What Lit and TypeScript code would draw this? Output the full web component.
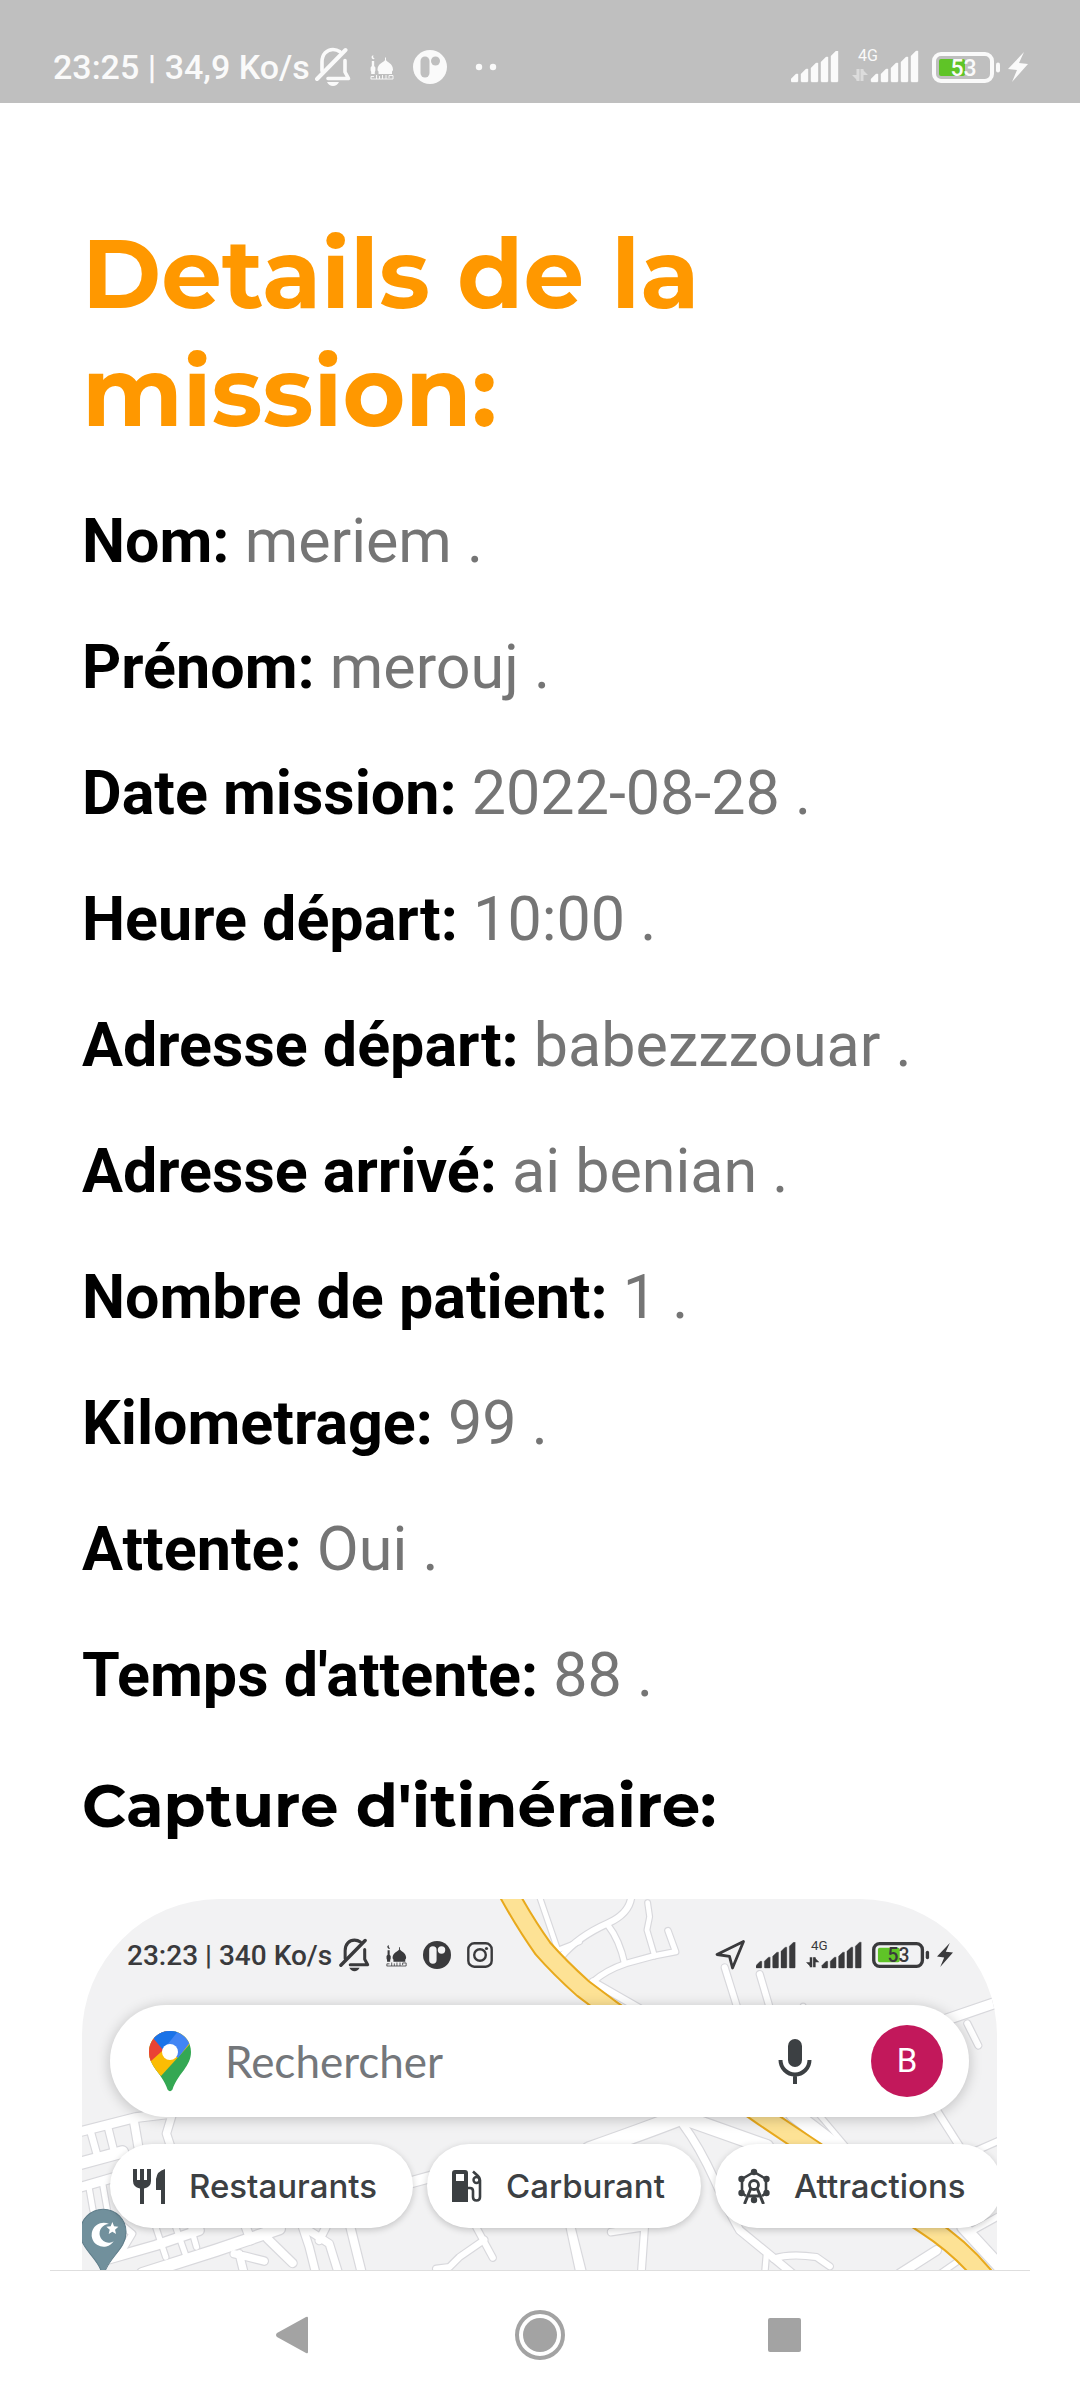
import { LitElement, html, css, svg, nothing } from "lit";
import { customElement, property } from "lit/decorators.js";

/* ---------- shared status bar ---------- */

const bars = svg`
  ${[8, 13, 19, 25, 31].map(
    (h, i) => svg`<path d="M${i * 10} ${31 - h + 5}l5-5h2V30q0 1-1 1h-5q-1 0-1-1z" stroke="currentColor" stroke-width=".4"/>`
  )}`;

@customElement("status-icons")
class StatusIcons extends LitElement {
  @property() time = "";
  @property() rate = "";
  @property({ type: Boolean }) compact = false;

  static styles = css`
    :host {
      display: flex;
      justify-content: space-between;
      align-items: center;
      font-family: Roboto, "Liberation Sans", sans-serif;
      color: #fafafa;
      --dim: #dcdcdc;
      --hole: #bfbfbf;
    }
    :host([compact]) {
      color: #3a3a3c;
      --dim: #3a3a3c;
      --hole: #f2f2f3;
    }
    svg {
      display: block;
      fill: currentColor;
    }
    .side {
      display: flex;
      align-items: center;
      gap: 19px;
    }
    .label {
      display: flex;
      align-items: center;
      gap: 5px;
      font-size: 34px;
      font-weight: 500;
      white-space: nowrap;
    }
    .right {
      gap: 13px;
    }
    .power {
      display: flex;
      align-items: center;
      gap: 7px;
    }
    .bell { width: 36px; height: 40px; }
    .mosque { width: 24px; height: 26px; }
    .disc { width: 34px; height: 34px; }
    .dots { width: 50px; height: 8px; }
    .signal { width: 48px; height: 32px; }
    .network { width: 67px; height: 44px; }
    .battery { width: 69px; height: 31px; }
    .bolt { width: 20px; height: 32px; }
    :host([compact]) .side { gap: 16px; }
    :host([compact]) .right { gap: 10px; }
    :host([compact]) .power { gap: 7px; }
    :host([compact]) .label { font-size: 28px; gap: 7px; }
    :host([compact]) .bell { width: 31px; height: 34px; }
    :host([compact]) .mosque { width: 21px; height: 23px; }
    :host([compact]) .disc { width: 28px; height: 28px; }
    :host([compact]) .insta { width: 26px; height: 26px; }
    :host([compact]) .arrow { width: 31px; height: 32px; }
    :host([compact]) .signal { width: 40px; height: 27px; }
    :host([compact]) .network { width: 56px; height: 37px; }
    :host([compact]) .battery { width: 58px; height: 26px; }
    :host([compact]) .bolt { width: 16px; height: 26px; }
    text { font-family: Roboto, sans-serif; }
  `;

  render() {
    return html`
      <div class="side">
        <div class="label">
          <span>${this.time} | ${this.rate}</span>
          <svg class="bell" viewBox="0 0 36 40" aria-hidden="true">
            <path d="M7 24V15C7 7 12 2.500 18 2.500c3 0 5 .8 7 2.200M30 13.500V25l3.500 6.500H13" fill="none" stroke="currentColor" stroke-width="3.600" stroke-linejoin="round" stroke-linecap="round"/>
            <path d="M2 32L30.500 3" stroke="currentColor" stroke-width="4" stroke-linecap="round"/>
            <path d="M12 35h12q-2 4-6 4t-6-4z"/>
          </svg>
        </div>
        <svg class="mosque" viewBox="0 0 24 26" aria-hidden="true">
          <path d="M1.800 7h2.400v5l1.200 1.500v3L4.800 18v2H1.200v-2L.6 16.500v-3L1.800 12z"/>
          <path d="M15 3.500h1V6c.5 1.800 7 3.500 7 9.500 0 1-.5 1.500-1 2V20H8.500v-2.500c-.5-.5-1-1-1-2 0-6 7-7.700 7.500-9.500z"/>
          <path d="M3.500 1.200A2 2 0 1 0 4.800 4.800 2.400 2.400 0 0 1 3.500 1.200z"/>
          <path d="M.8 25H23V21.500h-4V24M16 21v4M12.500 21v4M9.500 22v3M6.500 21v4M4 22.500H1V25" fill="none" stroke="currentColor" stroke-width=".9"/>
        </svg>
        <svg class="disc" viewBox="0 0 34 34" aria-hidden="true">
          <circle cx="17" cy="17" r="17"/>
          <rect x="7.500" y="6.500" width="9" height="21" rx="4.500" fill="var(--hole)"/>
          <circle cx="22.500" cy="11" r="4.500" fill="var(--hole)"/>
        </svg>
        ${this.compact
          ? html`<svg class="insta" viewBox="0 0 26 26" aria-hidden="true">
              <g fill="none" stroke="currentColor" stroke-width="2.400">
                <rect x="1.300" y="1.300" width="23.400" height="23.400" rx="6"/>
                <circle cx="13" cy="13" r="5.800"/>
              </g>
              <circle cx="19.500" cy="6.500" r="1.600"/>
            </svg>`
          : html`<svg class="dots" viewBox="0 0 50 8" aria-hidden="true">
              <circle cx="13" cy="4" r="3.200"/><circle cx="27" cy="4" r="3.200"/>
            </svg>`}
      </div>
      <div class="side right">
        ${this.compact
          ? html`<svg class="arrow" viewBox="0 0 31 32" aria-hidden="true">
              <path d="M28.500 2.500L2 15.500l12.500 1.800L17.500 29z" fill="none" stroke="currentColor" stroke-width="2.800" stroke-linejoin="round"/>
            </svg>`
          : nothing}
        <svg class="signal" viewBox="0 0 48 32" aria-hidden="true">${bars}</svg>
        <svg class="network" viewBox="0 -4 67 44">
          <text x="6" y="12" font-size="16">4G</text>
          <path d="M6 20v12M10 20v12" stroke="var(--dim)" stroke-width="3"/>
          <path d="M0 26h6v6zM10 20l6 6h-6z" fill="var(--dim)"/>
          <g transform="translate(19 2)">${bars}</g>
        </svg>
        <div class="power">
          <svg class="battery" viewBox="0 0 69 31">
            <rect x="2" y="2" width="58" height="27" rx="7" fill="none" stroke="currentColor" stroke-width="4"/>
            <rect x="7" y="7" width="26" height="17" rx="2" fill="#5fc427"/>
            <rect x="64" y="10.500" width="4" height="10" rx="2"/>
            <text x="18.500" y="24" font-size="23" font-weight="500">53</text>
          </svg>
          <svg class="bolt" viewBox="0 0 20 32" aria-hidden="true">
            <path d="M16 1L0 18l9 1-5 12L20 13l-9-1z"/>
          </svg>
        </div>
      </div>
    `;
  }
}

/* ---------- map drawing ---------- */

const roads: Array<[number, string]> = [
  [18, "M1505 230Q1555 170 1645 130Q1710 100 1715 50"],
  [16, "M1645 135Q1680 180 1695 250"],
  [16, "M1600 305Q1640 270 1700 250L1780 228 1848 215 1825 152"],
  [14, "M1785 228L1762 150 1770 110 1764 68"],
  [14, "M1440 50L1495 210 1560 185"],
  [18, "M1995 262L2035 390"],
  [18, "M2100 282L2132 390"],
  [14, "M2230 378V400"],
  [20, "M1600 305L1740 385"],
  [30, "M2830 360L2640 425"],
  [18, "M2722 430L2755 496"],
  [20, "M2630 690L2700 800"],
  [18, "M2820 780L2740 815"],
  [48, "M1590 810Q1760 750 1850 715"],
  [42, "M1880 715Q1980 750 2120 800"],
  [22, "M1868 730Q1920 800 1965 900T2040 1050L2150 1140 2210 1190"],
  [44, "M2200 700L2330 800"],
  [14, "M2275 700L2360 800"],
  [20, "M1535 1040L1570 1180"],
  [20, "M1655 1055L1755 1040 1745 1180"],
  [16, "M2120 1120L2115 1180"],
  [18, "M2140 1135Q2190 1118 2270 1130L2310 1158"],
  [26, "M2630 1110L2520 1180"],
  [16, "M2690 1145L2640 1180"],
  [36, "M2710 1040L2830 1170"],
  [18, "M2730 1055L2830 1000"],
  [18, "M1250 1040L1300 1132"],
  [18, "M1275 1078L1200 1130 1170 1160 1130 1165"],
  [18, "M1530 1040L1560 1180"],
  [26, "M60 755L230 712 330 700"],
  [22, "M340 700L322 760 335 800"],
  [34, "M60 850L190 815"],
  [20, "M95 755L118 838"],
  [20, "M148 745L168 825"],
  [24, "M225 725L238 800"],
  [26, "M60 922L170 890"],
  [16, "M88 910L102 990"],
  [16, "M130 905L145 990"],
  [18, "M160 1010L220 1060 190 1110"],
  [28, "M150 1135L290 1095 420 1050"],
  [34, "M250 1180L470 1110 660 1045"],
  [16, "M290 1040L320 1130"],
  [16, "M350 1040L378 1120"],
  [16, "M395 1040L412 1100"],
  [24, "M560 1040L575 1080"],
  [24, "M625 1075L700 1148"],
  [22, "M730 1040L750 1100 770 1180"],
  [22, "M740 1045L810 1090 838 1180"],
  [22, "M800 1040L780 1080"],
  [24, "M872 1035L908 1180"],
  [22, "M525 1120L560 1128 615 1142M540 1120L555 1180"],
  [30, "M1040 910L1120 888"],
];

const highway =
  "M1350 45Q1400 135 1450 205Q1500 262 1570 325L1650 385 2110 708 2235 792 2600 1035Q2700 1100 2770 1185";

const mapDrawing = svg`
  <g fill="none" stroke-linecap="round" stroke-linejoin="round">
    ${roads.map(([w, d]) => svg`<path d=${d} stroke="#d8d8dc" stroke-width=${w + 7}/>`)}
    ${roads.map(([w, d]) => svg`<path d=${d} stroke="#fff" stroke-width=${w}/>`)}
    <path d=${highway} stroke="#e8a91c" stroke-width="62"/>
    <path d=${highway} stroke="#fde295" stroke-width="50"/>
  </g>
  <path d="M132 1190C120 1130 64 1110 64 1055a68 68 0 0 1 137 0C201 1110 145 1130 132 1190z" fill="#71909c" stroke="#5f7d8a" stroke-width="3"/>
  <path d="M150 1031a36 36 0 1 0 14 52a28 28 0 1 1-14-52z" fill="#fff"/>
  <path d="M160 1025l5 13 13 1-10 9 3 13-11-7-11 7 3-13-10-9 13-1z" fill="#fff"/>
`;

/* ---------- itinerary capture ---------- */

@customElement("route-capture")
class RouteCapture extends LitElement {
  static styles = css`
    :host {
      display: block;
      position: relative;
      overflow: hidden;
      border-radius: 137px 137px 0 0;
      background: #f2f2f3;
      font-family: Lato, "Open Sans", sans-serif;
      color: #3c4043;
    }
    svg {
      display: block;
      flex: none;
    }
    .map {
      position: absolute;
      inset: 0;
      width: 100%;
      height: 100%;
    }
    .overlay {
      position: relative;
      padding-top: 38px;
    }
    status-icons {
      margin: 0 44px 0 45px;
      height: 36px;
    }
    button {
      border: 0;
      padding: 0;
      background: none;
      font: inherit;
      color: inherit;
    }
    .search {
      display: flex;
      align-items: center;
      height: 112px;
      margin: 32px 28px 27px;
      padding: 0 26px 0 38px;
      box-sizing: border-box;
      border-radius: 56px;
      background: #fff;
      box-shadow: 0 2px 14px rgba(0, 0, 0, 0.22);
    }
    .pin { width: 44px; height: 62px; }
    .search input {
      flex: 1;
      min-width: 0;
      margin-left: 33px;
      padding: 0;
      border: 0;
      outline: 0;
      background: none;
      font: 44px/56px Lato, "Open Sans", sans-serif;
      color: #3c4043;
    }
    .search input::placeholder {
      color: #74777b;
      opacity: 1;
    }
    .mic svg { width: 34px; height: 46px; }
    .avatar {
      width: 72px;
      height: 72px;
      margin-left: 59px;
      border-radius: 50%;
      background: #c2185b;
      color: #fff;
      font: 33px/72px Roboto, sans-serif;
    }
    .chips {
      display: flex;
      gap: 14px;
      margin-left: 28px;
    }
    .chips button {
      display: flex;
      align-items: center;
      flex: none;
      gap: 23px;
      height: 84px;
      padding: 0 36px 0 22px;
      border-radius: 42px;
      background: #fff;
      box-shadow: 0 2px 7px rgba(0, 0, 0, 0.2);
      font: 500 33px/40px Inter, sans-serif;
    }
    .chips svg {
      width: 34px;
      height: 36px;
      fill: #3c4043;
    }
  `;

  render() {
    return html`
      <svg class="map" viewBox="69 57 2742 1113" preserveAspectRatio="xMinYMin slice" aria-hidden="true">
        ${mapDrawing}
      </svg>
      <div class="overlay">
        <status-icons compact time="23:23" rate="340 Ko/s"></status-icons>
        <div class="search">
          <svg class="pin" viewBox="0 0 44 62" aria-hidden="true">
            <defs>
              <clipPath id="pin"><path d="M22 1C10 1 1 10 1 22c0 7 3 12 7 18 6 8 9 12 11.500 19.500Q22 63 24.500 59.500C27 52 30 48 36 40c4-6 7-11 7-18C43 10 34 1 22 1z"/></clipPath>
            </defs>
            <g clip-path="url(#pin)">
              <path d="M0 0h44v62H0z" fill="#34a853"/>
              <path d="M0 0H44V12L13 46 0 34z" fill="#fbbc04"/>
              <path d="M0 0H20L22 14 3 31 0 32z" fill="#ea4335"/>
              <path d="M44 0V10L30 28 15 16 6 9V0z" fill="#4285f4"/>
              <path d="M0 0H31L15 20 6 9z" fill="#1a73e8"/>
            </g>
            <circle cx="22" cy="22" r="8" fill="#fff"/>
          </svg>
          <input type="text" placeholder="Rechercher" aria-label="Rechercher" />
          <button class="mic" aria-label="Recherche vocale">
            <svg viewBox="0 0 34 46" aria-hidden="true">
              <rect x="10" y="1" width="14" height="28" rx="7" fill="#3c4043"/>
              <path d="M2.500 22a14.500 14.500 0 0 0 29 0M17 36v10" fill="none" stroke="#3c4043" stroke-width="4"/>
            </svg>
          </button>
          <button class="avatar" aria-label="Compte B">B</button>
        </div>
        <div class="chips">
          <button>
            <svg viewBox="0 0 34 36" aria-hidden="true">
              <path d="M1 1h4v11h3V1h4v11h3V1h4v12q0 6-7 7.500V36H8V20.500Q1 19 1 13zM33 1v35h-4V22h-5V11q1-8 9-10z"/>
            </svg>
            Restaurants
          </button>
          <button>
            <svg viewBox="0 0 34 36" aria-hidden="true">
              <path fill-rule="evenodd" d="M6 2h10q3 0 3 3v29H3V5q0-3 3-3zm1 4v7h8V6z"/>
              <path d="M19 20h2q3 0 3 3v6q0 3.500 3.500 3.500T31 29V12q0-2-2-4l-5-4.500" fill="none" stroke="#3c4043" stroke-width="2.600"/>
              <circle cx="27.500" cy="12" r="3" fill="none" stroke="#3c4043" stroke-width="2.400"/>
            </svg>
            Carburant
          </button>
          <button>
            <svg viewBox="0 0 34 36" aria-hidden="true">
              <path d="M17 4L29 11V25L25 28M9 28L5 25V11L17 4" fill="none" stroke="#3c4043" stroke-width="2.600"/>
              <circle cx="17" cy="17" r="4.500" fill="none" stroke="#3c4043" stroke-width="2.800"/>
              <path d="M14 20L7.500 36M20 20l6.500 16M12 28h10" fill="none" stroke="#3c4043" stroke-width="3"/>
              <circle cx="17" cy="4" r="3.200"/><circle cx="4.500" cy="11" r="3.200"/>
              <circle cx="29.500" cy="11" r="3.200"/><circle cx="4.500" cy="25" r="3.200"/>
              <circle cx="29.500" cy="25" r="3.200"/><circle cx="17" cy="32" r="3.200"/>
            </svg>
            Attractions
          </button>
        </div>
      </div>
    `;
  }
}

/* ---------- page ---------- */

const details: Array<[string, string]> = [
  ["Nom:", "meriem"],
  ["Prénom:", "merouj"],
  ["Date mission:", "2022-08-28"],
  ["Heure départ:", "10:00"],
  ["Adresse départ:", "babezzzouar"],
  ["Adresse arrivé:", "ai benian"],
  ["Nombre de patient:", "1"],
  ["Kilometrage:", "99"],
  ["Attente:", "Oui"],
  ["Temps d'attente:", "88"],
];

@customElement("app-root")
class AppRoot extends LitElement {
  static styles = css`
    :host {
      display: flex;
      flex-direction: column;
      height: 100vh;
      background: #fff;
      font-family: Roboto, "Liberation Sans", sans-serif;
    }
    .status {
      background: #bfbfbf;
      padding: 31px 52px 0 53px;
    }
    .status status-icons {
      height: 72px;
    }
    main {
      flex: 1;
      min-height: 0;
      display: flex;
      flex-direction: column;
      padding: 112px 83px 0 82px;
      overflow: hidden;
    }
    h1,
    h2 {
      margin: 0;
      font-family: Montserrat, Inter, sans-serif;
      font-weight: 700;
    }
    h1 {
      font-size: 96px;
      line-height: 118px;
      color: #ff9800;
    }
    .details {
      display: flex;
      flex-direction: column;
      gap: 55px;
      margin: 55px 0 58px;
    }
    p {
      margin: 0;
      font-size: 61px;
      line-height: 71px;
      color: #757575;
    }
    strong {
      font-weight: 700;
      color: #000;
    }
    h2 {
      font-size: 61px;
      line-height: 73px;
      color: #000;
    }
    route-capture {
      flex: 1;
      min-height: 0;
      margin-top: 57px;
    }
    nav {
      display: flex;
      justify-content: center;
      gap: 196px;
      margin: 0 50px;
      padding: 38px 0 39px;
      border-top: 1px solid #dedede;
    }
    nav button {
      border: 0;
      padding: 0;
      background: none;
    }
    nav svg {
      display: block;
      width: 52px;
      height: 52px;
      fill: #a3a3a3;
    }
  `;

  render() {
    return html`
      <header class="status">
        <status-icons time="23:25" rate="34,9 Ko/s"></status-icons>
      </header>
      <main>
        <h1>Details de la mission:</h1>
        <div class="details">
          ${details.map(([label, value]) => html`<p><strong>${label}</strong> ${value} .</p>`)}
        </div>
        <h2>Capture d'itinéraire:</h2>
        <route-capture></route-capture>
      </main>
      <nav>
        <button aria-label="Retour">
          <svg viewBox="0 0 52 52"><path d="M42 9v34q0 2-2 1L11 28q-2-2 0-4L40 8q2-1 2 1z"/></svg>
        </button>
        <button aria-label="Accueil">
          <svg viewBox="0 0 52 52">
            <circle cx="26" cy="26" r="23" fill="none" stroke="#a3a3a3" stroke-width="4"/>
            <circle cx="26" cy="26" r="17"/>
          </svg>
        </button>
        <button aria-label="Applications récentes">
          <svg viewBox="0 0 52 52"><rect x="6" y="9" width="33" height="34" rx="2"/></svg>
        </button>
      </nav>
    `;
  }
}
